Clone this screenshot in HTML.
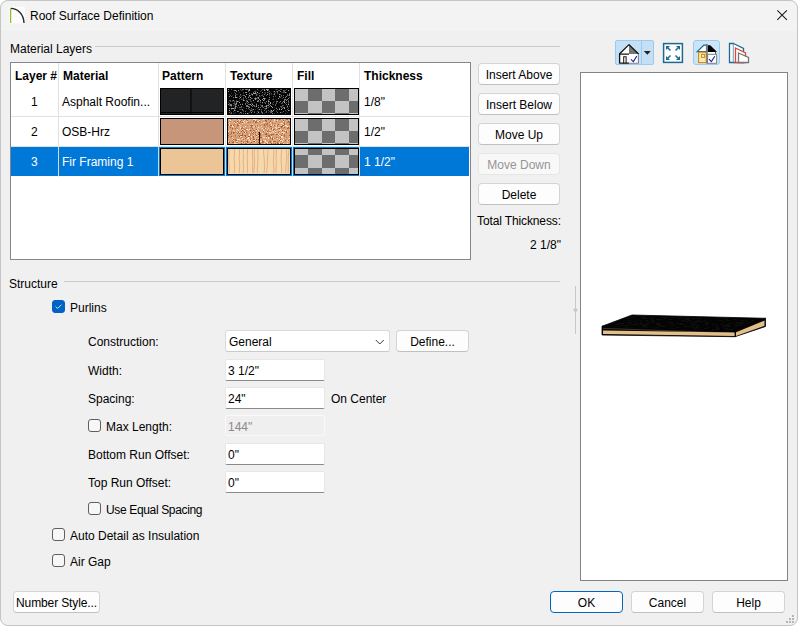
<!DOCTYPE html>
<html><head><meta charset="utf-8">
<style>
*{box-sizing:border-box;margin:0;padding:0}
html,body{width:798px;height:626px;overflow:hidden;background:#ffffff}
body{font-family:"Liberation Sans",sans-serif;font-size:12px;color:#000;position:relative}
.win{position:absolute;left:0;top:0;width:798px;height:626px;background:#f0f0f0;border-radius:8px;overflow:hidden}
.frame{position:absolute;left:0;top:0;width:798px;height:626px;border:1px solid #c4c4c4;border-radius:8px;pointer-events:none}
.title{position:absolute;left:0;top:0;width:798px;height:31px;background:#f3f3f3}
.a{position:absolute;white-space:nowrap;line-height:14px}
.btn{position:absolute;background:#fdfdfd;border:1px solid #d4d4d4;border-bottom-color:#c0c0c0;border-radius:4px;text-align:center;line-height:22px;font-size:12px;white-space:nowrap}
.btn.dis{color:#959595;background:#f8f8f8;border-color:#e6e6e6}
.inp{position:absolute;background:#fff;border:1px solid #e6e6e6;border-bottom:1px solid #8a8a8a;border-radius:2px;padding-left:2px;line-height:22px;white-space:nowrap}
.inp.dis{background:#efefef;color:#8a8a8a;border:1px solid #f9f9f9}
.cb{position:absolute;width:13px;height:13px;border:1px solid #5f5f5f;border-radius:3px;background:#f7f7f7}
.cb.on{background:#0063c6;border-color:#0063c6}
.grp{position:absolute;height:1px;background:#cbcbcb}
.tbl{position:absolute;left:10px;top:62px;width:461px;height:198px;background:#fff;border:1px solid #82878f}
.vl{position:absolute;width:1px;background:#e1e1e1}
.hl{position:absolute;left:0;height:1px;width:459px;background:#e1e1e1}
.b{font-weight:bold}
.sw{position:absolute;width:65px;height:27px;border:1px solid #000;overflow:hidden}
.sw svg{display:block}
.sel{color:#fff}
</style></head><body>
<div class="win">
 <div class="title"></div>
 <!-- title icon -->
 <svg class="a" style="left:9px;top:6px" width="17" height="18" viewBox="0 0 17 18">
  <rect x="0" y="0.5" width="16" height="17" fill="#fcfcfc"/>
  <path d="M1.6 2.4 C8.5 2.4 14.6 7.5 15 17" stroke="#2b2b2b" stroke-width="1.4" fill="none"/>
  <line x1="1.6" y1="3" x2="1.6" y2="17" stroke="#8cbf26" stroke-width="1.3"/>
 </svg>
 <div class="a" style="left:30px;top:9px">Roof Surface Definition</div>
 <svg class="a" style="left:776px;top:9px" width="13" height="13" viewBox="0 0 13 13">
  <path d="M1.3 1.3 L10.9 10.9 M10.9 1.3 L1.3 10.9" stroke="#1a1a1a" stroke-width="1.05"/>
 </svg>

 <!-- Material layers -->
 <div class="a" style="left:10px;top:42px">Material Layers</div>
 <div class="grp" style="left:95px;top:46px;width:465px"></div>

 <div class="tbl">
  <div class="vl" style="left:47px;top:0;height:114px"></div>
  <div class="vl" style="left:147px;top:0;height:114px"></div>
  <div class="vl" style="left:214px;top:0;height:114px"></div>
  <div class="vl" style="left:281px;top:0;height:114px"></div>
  <div class="vl" style="left:348px;top:0;height:114px"></div>
  <div class="hl" style="top:53px"></div>
  <div class="hl" style="top:83px"></div>
  <div class="a" style="left:0;top:84px;width:458px;height:29px;background:#0078d7"></div>
  <div class="vl" style="left:47px;top:84px;height:29px;background:#d8d8d8"></div>
  <div class="vl" style="left:147px;top:84px;height:29px;background:#d8d8d8"></div>
  <div class="vl" style="left:214px;top:84px;height:29px;background:#d8d8d8"></div>
  <div class="vl" style="left:281px;top:84px;height:29px;background:#d8d8d8"></div>
  <div class="vl" style="left:348px;top:84px;height:29px;background:#d8d8d8"></div>

  <div class="a b" style="left:4px;top:6px">Layer #</div>
  <div class="a b" style="left:52px;top:6px">Material</div>
  <div class="a b" style="left:151px;top:6px">Pattern</div>
  <div class="a b" style="left:219px;top:6px">Texture</div>
  <div class="a b" style="left:286px;top:6px">Fill</div>
  <div class="a b" style="left:353px;top:6px">Thickness</div>

  <div class="a" style="left:20px;top:32px">1</div>
  <div class="a" style="left:51px;top:32px">Asphalt Roofin...</div>
  <div class="a" style="left:353px;top:32px">1/8"</div>
  <div class="a" style="left:20px;top:62px">2</div>
  <div class="a" style="left:51px;top:62px">OSB-Hrz</div>
  <div class="a" style="left:353px;top:62px">1/2"</div>
  <div class="a sel" style="left:20px;top:92px">3</div>
  <div class="a sel" style="left:51px;top:92px">Fir Framing 1</div>
  <div class="a sel" style="left:353px;top:92px">1 1/2"</div>

  <!-- swatches row1 -->
  <div class="sw" style="left:149px;top:25px;width:64px;background:#222324"><svg width="63" height="25"><rect x="29.5" y="0" width="1" height="25" fill="#000"/><rect x="0" y="23" width="63" height="1" fill="#000"/></svg></div>
  <div class="sw" style="left:216px;top:25px;width:64px"><svg width="63" height="25"><rect width="63" height="25" fill="#060606"/><path fill="#a8a8a8" d="M4 19h1v1h-1zM48 18h1v1h-1zM19 24h1v1h-1zM18 3h1v1h-1zM5 11h1v1h-1zM26 4h1v1h-1zM55 3h1v1h-1zM38 19h1v1h-1zM32 7h1v1h-1zM19 0h1v1h-1zM9 22h1v1h-1zM43 17h1v1h-1zM47 15h1v1h-1zM19 12h1v1h-1zM51 5h1v1h-1zM17 7h1v1h-1zM51 20h1v1h-1zM36 13h1v1h-1zM62 9h1v1h-1zM51 7h1v1h-1zM36 1h1v1h-1zM30 23h1v1h-1zM15 21h1v1h-1zM3 19h1v1h-1zM14 6h1v1h-1zM49 0h1v1h-1zM49 4h1v1h-1zM7 1h1v1h-1zM46 12h1v1h-1zM36 5h1v1h-1zM56 13h1v1h-1zM44 18h1v1h-1zM27 4h1v1h-1zM2 16h1v1h-1zM53 3h1v1h-1zM37 9h1v1h-1zM45 21h1v1h-1zM11 13h1v1h-1zM46 2h1v1h-1zM21 0h1v1h-1zM24 15h1v1h-1zM7 8h1v1h-1zM42 13h1v1h-1zM41 8h1v1h-1zM32 11h1v1h-1zM29 3h1v1h-1zM45 2h1v1h-1zM25 11h1v1h-1zM3 4h1v1h-1zM28 17h1v1h-1zM22 15h1v1h-1zM6 21h1v1h-1zM50 9h1v1h-1zM46 20h1v1h-1zM8 14h1v1h-1zM39 1h1v1h-1zM5 19h1v1h-1zM21 6h1v1h-1zM31 10h1v1h-1zM30 22h1v1h-1zM39 0h1v1h-1zM1 21h1v1h-1zM2 15h1v1h-1zM60 21h1v1h-1zM40 12h1v1h-1zM54 13h1v1h-1zM24 15h1v1h-1zM43 21h1v1h-1zM53 20h1v1h-1zM56 19h1v1h-1zM36 9h1v1h-1zM9 18h1v1h-1zM5 1h1v1h-1zM38 0h1v1h-1zM12 8h1v1h-1zM42 14h1v1h-1zM7 17h1v1h-1zM27 20h1v1h-1zM15 11h1v1h-1zM30 18h1v1h-1zM57 3h1v1h-1zM32 16h1v1h-1zM40 15h1v1h-1zM60 1h1v1h-1zM27 10h1v1h-1zM38 17h1v1h-1zM21 1h1v1h-1zM8 8h1v1h-1zM10 1h1v1h-1zM31 20h1v1h-1zM18 5h1v1h-1zM4 11h1v1h-1zM35 9h1v1h-1zM62 22h1v1h-1zM34 17h1v1h-1zM25 20h1v1h-1zM9 12h1v1h-1zM24 5h1v1h-1zM60 19h1v1h-1zM59 6h1v1h-1zM60 15h1v1h-1zM39 5h1v1h-1zM39 1h1v1h-1zM24 6h1v1h-1zM35 11h1v1h-1zM4 19h1v1h-1zM12 0h1v1h-1zM27 9h1v1h-1zM56 2h1v1h-1zM20 2h1v1h-1zM41 12h1v1h-1zM15 18h1v1h-1zM11 24h1v1h-1zM22 8h1v1h-1z"/><path fill="#8a8a8a" d="M35 7h1v1h-1zM25 20h1v1h-1zM14 20h1v1h-1zM49 2h1v1h-1zM6 1h1v1h-1zM11 11h1v1h-1zM43 23h1v1h-1zM19 16h1v1h-1zM41 8h1v1h-1zM2 16h1v1h-1zM20 18h1v1h-1zM58 13h1v1h-1zM34 10h1v1h-1zM34 3h1v1h-1zM15 8h1v1h-1zM31 10h1v1h-1zM27 3h1v1h-1zM29 0h1v1h-1zM51 13h1v1h-1zM0 15h1v1h-1zM56 12h1v1h-1zM55 18h1v1h-1zM52 2h1v1h-1zM11 20h1v1h-1zM53 23h1v1h-1zM25 4h1v1h-1zM46 5h1v1h-1zM17 24h1v1h-1zM62 8h1v1h-1zM30 12h1v1h-1zM58 7h1v1h-1zM57 8h1v1h-1zM46 20h1v1h-1zM59 17h1v1h-1zM30 9h1v1h-1zM52 23h1v1h-1zM37 19h1v1h-1zM55 12h1v1h-1zM34 16h1v1h-1zM36 5h1v1h-1zM1 19h1v1h-1zM14 15h1v1h-1zM61 21h1v1h-1zM23 19h1v1h-1zM44 22h1v1h-1zM44 24h1v1h-1zM34 13h1v1h-1zM38 12h1v1h-1zM62 0h1v1h-1zM16 11h1v1h-1zM12 5h1v1h-1zM25 16h1v1h-1zM40 0h1v1h-1zM7 19h1v1h-1zM28 15h1v1h-1zM1 7h1v1h-1zM57 10h1v1h-1zM60 9h1v1h-1zM49 12h1v1h-1zM0 2h1v1h-1zM61 6h1v1h-1zM20 17h1v1h-1zM52 12h1v1h-1zM38 16h1v1h-1zM13 10h1v1h-1zM18 0h1v1h-1zM12 23h1v1h-1zM50 9h1v1h-1zM4 6h1v1h-1zM33 17h1v1h-1zM0 0h1v1h-1zM40 16h1v1h-1zM34 0h1v1h-1zM2 15h1v1h-1zM33 20h1v1h-1zM18 16h1v1h-1zM36 10h1v1h-1zM7 15h1v1h-1zM58 11h1v1h-1zM61 5h1v1h-1zM9 22h1v1h-1zM11 9h1v1h-1zM41 4h1v1h-1zM3 16h1v1h-1zM17 3h1v1h-1zM60 11h1v1h-1zM62 15h1v1h-1zM29 12h1v1h-1zM11 9h1v1h-1zM20 8h1v1h-1zM36 0h1v1h-1zM23 16h1v1h-1zM8 2h1v1h-1zM23 23h1v1h-1zM56 12h1v1h-1zM18 17h1v1h-1zM0 15h1v1h-1zM30 8h1v1h-1zM56 18h1v1h-1zM56 10h1v1h-1zM42 16h1v1h-1zM21 18h1v1h-1zM12 15h1v1h-1zM20 15h1v1h-1zM23 12h1v1h-1zM7 6h1v1h-1zM19 14h1v1h-1zM36 5h1v1h-1zM30 22h1v1h-1z"/><path fill="#6e6e6e" d="M58 15h1v1h-1zM61 4h1v1h-1zM31 6h1v1h-1zM49 20h1v1h-1zM58 0h1v1h-1zM10 22h1v1h-1zM53 18h1v1h-1zM21 17h1v1h-1zM18 19h1v1h-1zM62 10h1v1h-1zM39 16h1v1h-1zM45 7h1v1h-1zM19 17h1v1h-1zM22 21h1v1h-1zM38 22h1v1h-1zM1 11h1v1h-1zM40 14h1v1h-1zM37 19h1v1h-1zM20 24h1v1h-1zM54 19h1v1h-1zM55 8h1v1h-1zM51 19h1v1h-1zM18 16h1v1h-1zM47 16h1v1h-1zM10 16h1v1h-1zM21 4h1v1h-1zM51 1h1v1h-1zM3 24h1v1h-1zM3 15h1v1h-1zM20 2h1v1h-1zM37 9h1v1h-1zM16 6h1v1h-1zM48 22h1v1h-1zM13 17h1v1h-1zM59 10h1v1h-1zM62 17h1v1h-1zM52 0h1v1h-1zM30 22h1v1h-1zM3 17h1v1h-1zM48 12h1v1h-1zM34 24h1v1h-1zM19 0h1v1h-1zM11 18h1v1h-1zM4 6h1v1h-1zM15 6h1v1h-1zM55 1h1v1h-1zM5 8h1v1h-1zM8 17h1v1h-1zM28 16h1v1h-1zM23 21h1v1h-1zM48 14h1v1h-1zM26 17h1v1h-1zM30 16h1v1h-1zM55 8h1v1h-1zM60 12h1v1h-1zM35 18h1v1h-1zM43 22h1v1h-1zM7 18h1v1h-1zM34 0h1v1h-1zM20 10h1v1h-1zM41 15h1v1h-1zM16 11h1v1h-1zM28 16h1v1h-1zM12 5h1v1h-1zM39 3h1v1h-1zM3 23h1v1h-1zM17 14h1v1h-1zM17 0h1v1h-1zM40 11h1v1h-1zM21 15h1v1h-1zM24 17h1v1h-1zM59 5h1v1h-1zM30 11h1v1h-1zM41 10h1v1h-1zM25 3h1v1h-1zM7 7h1v1h-1zM41 2h1v1h-1zM43 23h1v1h-1zM28 2h1v1h-1zM54 13h1v1h-1zM46 4h1v1h-1zM6 14h1v1h-1zM23 9h1v1h-1zM1 14h1v1h-1zM56 11h1v1h-1zM15 0h1v1h-1zM28 9h1v1h-1zM26 23h1v1h-1zM32 13h1v1h-1zM6 13h1v1h-1zM28 14h1v1h-1zM17 0h1v1h-1zM17 22h1v1h-1zM28 6h1v1h-1zM20 1h1v1h-1zM13 1h1v1h-1zM8 13h1v1h-1zM53 0h1v1h-1zM29 8h1v1h-1zM7 4h1v1h-1zM8 12h1v1h-1zM1 23h1v1h-1zM34 17h1v1h-1zM48 19h1v1h-1zM36 21h1v1h-1zM33 22h1v1h-1zM37 14h1v1h-1zM32 18h1v1h-1zM49 23h1v1h-1zM55 22h1v1h-1zM18 9h1v1h-1zM8 15h1v1h-1zM54 19h1v1h-1zM31 4h1v1h-1zM14 0h1v1h-1zM20 13h1v1h-1zM34 23h1v1h-1zM30 4h1v1h-1zM40 21h1v1h-1zM12 18h1v1h-1zM37 17h1v1h-1zM39 16h1v1h-1zM53 6h1v1h-1zM11 9h1v1h-1z"/><path fill="#555555" d="M53 17h1v1h-1zM55 16h1v1h-1zM52 8h1v1h-1zM38 23h1v1h-1zM45 13h1v1h-1zM46 18h1v1h-1zM61 21h1v1h-1zM26 16h1v1h-1zM30 20h1v1h-1zM18 13h1v1h-1zM2 6h1v1h-1zM23 4h1v1h-1zM20 0h1v1h-1zM40 10h1v1h-1zM53 7h1v1h-1zM13 18h1v1h-1zM37 4h1v1h-1zM26 9h1v1h-1zM12 0h1v1h-1zM59 6h1v1h-1zM33 17h1v1h-1zM62 17h1v1h-1zM52 0h1v1h-1zM40 18h1v1h-1zM33 16h1v1h-1zM24 20h1v1h-1zM41 17h1v1h-1zM23 20h1v1h-1zM26 22h1v1h-1zM54 16h1v1h-1zM15 24h1v1h-1zM23 19h1v1h-1zM26 2h1v1h-1zM32 7h1v1h-1zM42 22h1v1h-1zM15 10h1v1h-1zM49 4h1v1h-1zM38 6h1v1h-1zM56 1h1v1h-1zM2 11h1v1h-1zM21 10h1v1h-1zM47 15h1v1h-1zM7 21h1v1h-1zM41 5h1v1h-1zM17 8h1v1h-1zM22 10h1v1h-1zM12 18h1v1h-1zM42 23h1v1h-1zM53 14h1v1h-1zM57 21h1v1h-1zM33 20h1v1h-1zM59 20h1v1h-1zM32 2h1v1h-1zM55 6h1v1h-1zM50 1h1v1h-1zM10 12h1v1h-1zM1 14h1v1h-1zM48 22h1v1h-1zM28 5h1v1h-1zM3 0h1v1h-1zM28 10h1v1h-1zM3 7h1v1h-1zM2 12h1v1h-1zM6 12h1v1h-1zM57 24h1v1h-1zM51 13h1v1h-1zM48 0h1v1h-1zM6 14h1v1h-1zM6 20h1v1h-1zM18 19h1v1h-1zM22 6h1v1h-1zM21 7h1v1h-1zM60 13h1v1h-1zM57 24h1v1h-1zM17 15h1v1h-1zM2 11h1v1h-1zM58 13h1v1h-1zM23 5h1v1h-1zM19 14h1v1h-1zM13 24h1v1h-1zM15 21h1v1h-1zM57 14h1v1h-1zM51 8h1v1h-1zM33 1h1v1h-1zM31 7h1v1h-1zM41 12h1v1h-1zM20 19h1v1h-1zM26 2h1v1h-1zM27 8h1v1h-1zM11 7h1v1h-1zM34 6h1v1h-1zM49 3h1v1h-1zM45 10h1v1h-1zM33 23h1v1h-1zM36 13h1v1h-1zM62 1h1v1h-1zM55 3h1v1h-1zM13 10h1v1h-1zM15 9h1v1h-1zM61 8h1v1h-1zM33 16h1v1h-1zM3 7h1v1h-1zM3 17h1v1h-1zM56 3h1v1h-1zM23 12h1v1h-1zM56 2h1v1h-1zM1 11h1v1h-1zM20 15h1v1h-1zM21 20h1v1h-1zM11 7h1v1h-1zM52 17h1v1h-1zM18 11h1v1h-1zM33 6h1v1h-1zM3 23h1v1h-1zM11 3h1v1h-1zM7 16h1v1h-1zM3 7h1v1h-1z"/><path fill="#404040" d="M15 18h1v1h-1zM8 11h1v1h-1zM30 20h1v1h-1zM45 15h1v1h-1zM36 11h1v1h-1zM37 13h1v1h-1zM61 17h1v1h-1zM24 22h1v1h-1zM6 19h1v1h-1zM24 14h1v1h-1zM24 20h1v1h-1zM27 8h1v1h-1zM0 13h1v1h-1zM49 0h1v1h-1zM6 3h1v1h-1zM60 19h1v1h-1zM55 2h1v1h-1zM2 22h1v1h-1zM15 8h1v1h-1zM5 16h1v1h-1zM23 14h1v1h-1zM40 1h1v1h-1zM20 18h1v1h-1zM2 24h1v1h-1zM15 3h1v1h-1zM47 3h1v1h-1zM60 11h1v1h-1zM26 22h1v1h-1zM30 22h1v1h-1zM60 14h1v1h-1zM9 18h1v1h-1zM38 18h1v1h-1zM37 20h1v1h-1zM8 5h1v1h-1zM13 20h1v1h-1zM36 17h1v1h-1zM46 20h1v1h-1zM45 5h1v1h-1zM15 22h1v1h-1zM9 8h1v1h-1zM40 15h1v1h-1zM12 6h1v1h-1zM13 1h1v1h-1zM54 14h1v1h-1zM1 5h1v1h-1zM58 3h1v1h-1zM31 7h1v1h-1zM27 2h1v1h-1zM1 5h1v1h-1zM12 20h1v1h-1zM24 9h1v1h-1zM32 12h1v1h-1zM52 5h1v1h-1zM46 24h1v1h-1zM20 7h1v1h-1zM54 17h1v1h-1zM26 16h1v1h-1zM29 5h1v1h-1zM14 21h1v1h-1zM22 12h1v1h-1zM48 2h1v1h-1zM13 23h1v1h-1zM29 22h1v1h-1zM60 6h1v1h-1zM47 7h1v1h-1zM22 11h1v1h-1zM43 5h1v1h-1zM48 13h1v1h-1zM48 10h1v1h-1zM33 21h1v1h-1zM43 4h1v1h-1zM59 18h1v1h-1zM36 19h1v1h-1zM5 22h1v1h-1zM4 11h1v1h-1zM28 4h1v1h-1zM8 1h1v1h-1zM5 14h1v1h-1zM9 18h1v1h-1zM40 10h1v1h-1zM22 22h1v1h-1zM11 3h1v1h-1zM34 5h1v1h-1zM26 13h1v1h-1zM19 11h1v1h-1zM56 3h1v1h-1zM37 3h1v1h-1zM7 5h1v1h-1zM24 6h1v1h-1zM40 13h1v1h-1zM3 20h1v1h-1zM1 16h1v1h-1zM20 24h1v1h-1z"/><path fill="#303030" d="M47 0h1v1h-1zM14 10h1v1h-1zM38 21h1v1h-1zM36 3h1v1h-1zM41 6h1v1h-1zM27 20h1v1h-1zM39 18h1v1h-1zM8 1h1v1h-1zM37 1h1v1h-1zM20 5h1v1h-1zM27 20h1v1h-1zM20 10h1v1h-1zM21 23h1v1h-1zM29 11h1v1h-1zM27 17h1v1h-1zM14 1h1v1h-1zM29 24h1v1h-1zM30 1h1v1h-1zM35 0h1v1h-1zM7 14h1v1h-1zM7 23h1v1h-1zM42 3h1v1h-1zM6 18h1v1h-1zM36 3h1v1h-1zM54 3h1v1h-1zM32 16h1v1h-1zM29 19h1v1h-1zM48 18h1v1h-1zM59 16h1v1h-1zM30 4h1v1h-1zM6 15h1v1h-1zM20 7h1v1h-1zM44 15h1v1h-1zM1 15h1v1h-1zM4 12h1v1h-1zM41 22h1v1h-1zM37 23h1v1h-1zM6 16h1v1h-1zM42 21h1v1h-1zM48 10h1v1h-1zM45 9h1v1h-1zM46 18h1v1h-1zM11 20h1v1h-1zM11 11h1v1h-1zM58 10h1v1h-1zM34 18h1v1h-1zM36 24h1v1h-1zM7 5h1v1h-1zM6 24h1v1h-1zM45 2h1v1h-1zM4 6h1v1h-1zM57 1h1v1h-1zM2 22h1v1h-1zM5 1h1v1h-1zM21 17h1v1h-1zM53 23h1v1h-1zM14 14h1v1h-1zM58 22h1v1h-1zM9 5h1v1h-1zM5 24h1v1h-1zM28 14h1v1h-1zM28 2h1v1h-1zM13 7h1v1h-1zM3 4h1v1h-1zM48 21h1v1h-1zM29 9h1v1h-1zM47 6h1v1h-1zM47 6h1v1h-1zM31 24h1v1h-1zM18 12h1v1h-1zM27 1h1v1h-1zM15 4h1v1h-1zM6 13h1v1h-1zM32 15h1v1h-1zM14 6h1v1h-1zM7 23h1v1h-1zM53 3h1v1h-1zM44 14h1v1h-1zM11 24h1v1h-1zM59 23h1v1h-1zM32 7h1v1h-1zM21 23h1v1h-1zM46 12h1v1h-1zM23 20h1v1h-1zM34 14h1v1h-1zM28 10h1v1h-1zM40 23h1v1h-1zM28 24h1v1h-1zM40 3h1v1h-1zM54 23h1v1h-1zM54 9h1v1h-1zM24 21h1v1h-1zM44 10h1v1h-1z"/></svg></div>
  <div class="sw" style="left:283px;top:25px"><svg width="63" height="25" style="display:block"><rect width="63" height="25" fill="#c3c3c3"/><path fill="#6d6d6d" d="M13 0H27V12H13zM40 0H54V12H40zM0 12H13V24H0zM27 12H40V24H27zM54 12H63V24H54zM13 24H27V25H13zM40 24H54V25H40z"/></svg></div>
  <!-- row2 -->
  <div class="sw" style="left:149px;top:55px;width:64px;background:#c7967a"></div>
  <div class="sw" style="left:216px;top:55px;width:64px"><svg width="63" height="25"><rect width="63" height="25" fill="#d9a179"/><path fill="#f3d4b8" d="M28 11h1v1h-1zM6 23h1v1h-1zM27 20h1v1h-1zM16 5h1v1h-1zM10 0h1v1h-1zM28 7h1v1h-1zM18 3h1v1h-1zM1 0h1v1h-1zM30 19h1v1h-1zM57 0h1v1h-1zM25 20h1v1h-1zM32 16h1v1h-1zM29 10h1v1h-1zM24 13h1v1h-1zM49 19h1v1h-1zM14 10h1v1h-1zM34 14h1v1h-1zM5 11h1v1h-1zM56 0h1v1h-1zM1 6h1v1h-1zM45 14h1v1h-1zM49 10h1v1h-1zM55 6h1v1h-1zM40 11h1v1h-1zM19 15h1v1h-1zM12 17h1v1h-1zM30 22h1v1h-1zM26 23h1v1h-1zM54 13h1v1h-1zM56 13h1v1h-1zM23 23h1v1h-1zM32 18h1v1h-1zM55 13h1v1h-1zM4 18h1v1h-1zM25 21h1v1h-1zM10 20h1v1h-1zM51 13h1v1h-1zM51 11h1v1h-1zM16 3h1v1h-1zM45 12h1v1h-1zM9 22h1v1h-1zM46 1h1v1h-1zM23 20h1v1h-1zM31 10h1v1h-1zM13 12h1v1h-1zM56 8h1v1h-1zM0 12h1v1h-1zM28 17h1v1h-1zM25 22h1v1h-1zM42 4h1v1h-1zM54 4h1v1h-1zM39 13h1v1h-1zM25 7h1v1h-1zM10 11h1v1h-1zM32 11h1v1h-1zM38 15h1v1h-1zM4 20h1v1h-1zM45 20h1v1h-1zM45 6h1v1h-1zM6 2h1v1h-1zM10 3h1v1h-1zM0 24h1v1h-1zM8 12h1v1h-1zM42 2h1v1h-1zM33 4h1v1h-1zM61 19h1v1h-1zM46 11h1v1h-1zM45 15h1v1h-1zM45 12h1v1h-1zM44 22h1v1h-1zM53 6h1v1h-1zM61 4h1v1h-1zM53 16h1v1h-1zM25 16h1v1h-1zM28 11h1v1h-1zM24 16h1v1h-1zM35 21h1v1h-1zM22 21h1v1h-1zM36 19h1v1h-1zM12 6h1v1h-1zM58 5h1v1h-1zM47 24h1v1h-1zM55 5h1v1h-1zM32 13h1v1h-1zM35 3h1v1h-1zM60 22h1v1h-1zM27 1h1v1h-1zM36 0h1v1h-1zM30 16h1v1h-1zM36 24h1v1h-1zM27 0h1v1h-1zM42 3h1v1h-1zM32 8h1v1h-1zM62 13h1v1h-1zM45 15h1v1h-1zM27 2h1v1h-1zM32 8h1v1h-1zM44 22h1v1h-1zM61 1h1v1h-1zM53 21h1v1h-1zM21 21h1v1h-1zM58 7h1v1h-1zM39 24h1v1h-1zM62 2h1v1h-1zM55 7h1v1h-1zM26 15h1v1h-1zM20 23h1v1h-1zM42 20h1v1h-1zM34 10h1v1h-1zM10 0h1v1h-1zM21 21h1v1h-1zM51 12h1v1h-1zM29 2h1v1h-1zM57 3h1v1h-1zM11 1h1v1h-1zM58 6h1v1h-1zM52 21h1v1h-1zM53 24h1v1h-1zM41 12h1v1h-1zM16 4h1v1h-1z"/><path fill="#eac19e" d="M48 5h1v1h-1zM37 10h1v1h-1zM36 12h1v1h-1zM7 3h1v1h-1zM25 8h1v1h-1zM14 8h1v1h-1zM57 3h1v1h-1zM13 23h1v1h-1zM16 4h1v1h-1zM6 0h1v1h-1zM53 11h1v1h-1zM62 18h1v1h-1zM40 9h1v1h-1zM11 14h1v1h-1zM40 18h1v1h-1zM40 5h1v1h-1zM43 15h1v1h-1zM13 11h1v1h-1zM41 13h1v1h-1zM36 21h1v1h-1zM49 16h1v1h-1zM14 23h1v1h-1zM48 8h1v1h-1zM58 20h1v1h-1zM22 21h1v1h-1zM16 23h1v1h-1zM38 18h1v1h-1zM38 17h1v1h-1zM11 7h1v1h-1zM43 13h1v1h-1zM6 24h1v1h-1zM18 11h1v1h-1zM52 6h1v1h-1zM54 9h1v1h-1zM54 22h1v1h-1zM43 18h1v1h-1zM52 16h1v1h-1zM21 7h1v1h-1zM23 17h1v1h-1zM53 0h1v1h-1zM19 11h1v1h-1zM0 5h1v1h-1zM48 7h1v1h-1zM28 7h1v1h-1zM62 23h1v1h-1zM62 6h1v1h-1zM49 23h1v1h-1zM16 17h1v1h-1zM22 5h1v1h-1zM49 7h1v1h-1zM2 2h1v1h-1zM28 5h1v1h-1zM44 11h1v1h-1zM38 12h1v1h-1zM18 2h1v1h-1zM13 20h1v1h-1zM31 21h1v1h-1zM24 9h1v1h-1zM50 9h1v1h-1zM56 3h1v1h-1zM43 9h1v1h-1zM41 11h1v1h-1zM37 15h1v1h-1zM9 13h1v1h-1zM4 2h1v1h-1zM26 7h1v1h-1zM35 10h1v1h-1zM22 7h1v1h-1zM33 9h1v1h-1zM11 5h1v1h-1zM27 22h1v1h-1zM54 18h1v1h-1zM16 18h1v1h-1zM51 23h1v1h-1zM57 0h1v1h-1zM42 13h1v1h-1zM14 23h1v1h-1zM61 10h1v1h-1zM20 11h1v1h-1zM9 24h1v1h-1zM28 15h1v1h-1zM53 13h1v1h-1zM8 18h1v1h-1zM8 24h1v1h-1zM32 15h1v1h-1zM5 8h1v1h-1zM17 7h1v1h-1zM35 11h1v1h-1zM30 8h1v1h-1zM23 18h1v1h-1zM34 19h1v1h-1zM34 17h1v1h-1zM51 6h1v1h-1zM62 2h1v1h-1zM39 10h1v1h-1zM13 15h1v1h-1zM32 24h1v1h-1zM4 20h1v1h-1zM16 14h1v1h-1zM46 11h1v1h-1zM60 7h1v1h-1zM46 2h1v1h-1zM25 12h1v1h-1zM5 19h1v1h-1zM37 12h1v1h-1zM11 13h1v1h-1zM62 3h1v1h-1zM24 17h1v1h-1zM18 23h1v1h-1zM7 7h1v1h-1zM56 15h1v1h-1zM10 11h1v1h-1zM51 0h1v1h-1zM57 19h1v1h-1zM44 12h1v1h-1zM10 6h1v1h-1zM60 19h1v1h-1zM30 6h1v1h-1zM28 14h1v1h-1zM49 11h1v1h-1zM28 0h1v1h-1zM56 0h1v1h-1zM34 21h1v1h-1zM21 18h1v1h-1zM41 16h1v1h-1zM29 9h1v1h-1zM3 0h1v1h-1zM51 8h1v1h-1zM5 19h1v1h-1zM20 21h1v1h-1zM26 22h1v1h-1zM44 23h1v1h-1zM22 13h1v1h-1zM27 2h1v1h-1zM54 21h1v1h-1zM52 20h1v1h-1zM52 4h1v1h-1zM27 18h1v1h-1zM22 23h1v1h-1zM8 22h1v1h-1zM9 13h1v1h-1zM26 17h1v1h-1zM53 18h1v1h-1zM45 15h1v1h-1zM20 17h1v1h-1zM9 15h1v1h-1zM16 21h1v1h-1zM17 10h1v1h-1z"/><path fill="#c07c50" d="M38 7h1v1h-1zM31 0h1v1h-1zM55 23h1v1h-1zM22 16h1v1h-1zM40 17h1v1h-1zM20 17h1v1h-1zM10 16h1v1h-1zM23 13h1v1h-1zM16 11h1v1h-1zM55 22h1v1h-1zM53 24h1v1h-1zM17 16h1v1h-1zM37 12h1v1h-1zM2 1h1v1h-1zM13 24h1v1h-1zM12 3h1v1h-1zM42 19h1v1h-1zM39 2h1v1h-1zM18 18h1v1h-1zM28 16h1v1h-1zM19 16h1v1h-1zM15 2h1v1h-1zM47 12h1v1h-1zM15 12h1v1h-1zM20 3h1v1h-1zM25 1h1v1h-1zM60 9h1v1h-1zM52 7h1v1h-1zM13 9h1v1h-1zM22 19h1v1h-1zM0 3h1v1h-1zM42 5h1v1h-1zM62 12h1v1h-1zM42 15h1v1h-1zM4 7h1v1h-1zM49 24h1v1h-1zM25 22h1v1h-1zM12 8h1v1h-1zM50 9h1v1h-1zM22 0h1v1h-1zM2 15h1v1h-1zM20 3h1v1h-1zM43 10h1v1h-1zM15 20h1v1h-1zM8 23h1v1h-1zM43 6h1v1h-1zM56 15h1v1h-1zM56 2h1v1h-1zM56 3h1v1h-1zM7 12h1v1h-1zM55 23h1v1h-1zM2 2h1v1h-1zM16 10h1v1h-1zM50 22h1v1h-1zM50 0h1v1h-1zM6 7h1v1h-1zM53 22h1v1h-1zM19 14h1v1h-1zM5 10h1v1h-1zM4 21h1v1h-1zM23 8h1v1h-1zM38 14h1v1h-1zM50 16h1v1h-1zM46 19h1v1h-1zM43 10h1v1h-1zM32 3h1v1h-1zM37 7h1v1h-1zM22 3h1v1h-1zM23 11h1v1h-1zM19 21h1v1h-1zM25 19h1v1h-1zM44 18h1v1h-1zM61 22h1v1h-1zM7 17h1v1h-1zM61 9h1v1h-1zM56 7h1v1h-1zM58 18h1v1h-1zM19 2h1v1h-1zM18 9h1v1h-1zM11 5h1v1h-1zM29 24h1v1h-1zM20 17h1v1h-1zM19 22h1v1h-1zM2 18h1v1h-1zM22 24h1v1h-1zM44 6h1v1h-1zM21 10h1v1h-1zM61 2h1v1h-1zM9 9h1v1h-1zM4 10h1v1h-1zM47 13h1v1h-1zM34 21h1v1h-1zM6 5h1v1h-1zM15 9h1v1h-1zM49 14h1v1h-1zM42 1h1v1h-1zM14 9h1v1h-1zM38 7h1v1h-1zM11 2h1v1h-1zM27 2h1v1h-1zM26 1h1v1h-1zM47 22h1v1h-1zM11 13h1v1h-1zM41 12h1v1h-1zM22 21h1v1h-1zM57 21h1v1h-1zM30 14h1v1h-1zM29 3h1v1h-1zM62 17h1v1h-1zM47 4h1v1h-1zM35 22h1v1h-1zM3 14h1v1h-1zM49 7h1v1h-1zM32 6h1v1h-1zM15 2h1v1h-1zM4 15h1v1h-1zM44 11h1v1h-1zM60 3h1v1h-1zM45 24h1v1h-1zM37 4h1v1h-1zM52 0h1v1h-1zM3 0h1v1h-1zM18 24h1v1h-1zM32 15h1v1h-1zM14 14h1v1h-1zM18 18h1v1h-1zM22 8h1v1h-1zM43 17h1v1h-1zM19 6h1v1h-1zM30 21h1v1h-1zM17 10h1v1h-1z"/><path fill="#b06a40" d="M43 15h1v1h-1zM52 20h1v1h-1zM36 5h1v1h-1zM18 22h1v1h-1zM38 15h1v1h-1zM16 18h1v1h-1zM42 7h1v1h-1zM48 2h1v1h-1zM32 23h1v1h-1zM22 6h1v1h-1zM34 21h1v1h-1zM42 23h1v1h-1zM4 15h1v1h-1zM7 21h1v1h-1zM38 1h1v1h-1zM17 16h1v1h-1zM8 7h1v1h-1zM58 0h1v1h-1zM7 3h1v1h-1zM9 5h1v1h-1zM12 2h1v1h-1zM56 12h1v1h-1zM49 6h1v1h-1zM22 6h1v1h-1zM53 16h1v1h-1zM45 11h1v1h-1zM24 16h1v1h-1zM42 2h1v1h-1zM7 16h1v1h-1zM51 12h1v1h-1zM49 23h1v1h-1zM0 5h1v1h-1zM18 11h1v1h-1zM54 11h1v1h-1zM0 24h1v1h-1zM36 9h1v1h-1zM61 16h1v1h-1zM39 5h1v1h-1zM31 8h1v1h-1zM41 3h1v1h-1zM46 6h1v1h-1zM41 6h1v1h-1zM16 16h1v1h-1zM17 24h1v1h-1zM9 6h1v1h-1zM41 3h1v1h-1zM9 7h1v1h-1zM28 3h1v1h-1zM5 14h1v1h-1zM32 14h1v1h-1zM1 5h1v1h-1zM5 22h1v1h-1zM43 7h1v1h-1zM19 3h1v1h-1zM45 15h1v1h-1zM8 18h1v1h-1zM42 12h1v1h-1zM15 0h1v1h-1zM41 22h1v1h-1zM25 2h1v1h-1zM6 2h1v1h-1zM16 10h1v1h-1zM44 4h1v1h-1zM50 24h1v1h-1zM45 22h1v1h-1zM37 15h1v1h-1zM38 17h1v1h-1zM50 13h1v1h-1zM11 4h1v1h-1zM13 18h1v1h-1zM56 4h1v1h-1zM40 11h1v1h-1zM25 11h1v1h-1zM60 21h1v1h-1zM54 6h1v1h-1zM52 18h1v1h-1zM47 24h1v1h-1zM24 6h1v1h-1zM24 15h1v1h-1zM20 3h1v1h-1zM0 6h1v1h-1zM45 11h1v1h-1zM46 10h1v1h-1zM2 8h1v1h-1zM17 24h1v1h-1zM44 15h1v1h-1zM56 17h1v1h-1zM30 23h1v1h-1zM62 16h1v1h-1zM59 3h1v1h-1zM11 14h1v1h-1zM54 24h1v1h-1zM14 15h1v1h-1zM25 20h1v1h-1zM54 18h1v1h-1zM32 8h1v1h-1zM48 9h1v1h-1zM34 22h1v1h-1zM56 4h1v1h-1zM50 1h1v1h-1zM43 0h1v1h-1zM40 23h1v1h-1zM14 8h1v1h-1zM24 9h1v1h-1zM8 18h1v1h-1zM42 22h1v1h-1zM9 23h1v1h-1zM51 21h1v1h-1zM9 0h1v1h-1zM43 16h1v1h-1zM56 16h1v1h-1zM7 9h1v1h-1zM7 20h1v1h-1zM5 14h1v1h-1zM26 11h1v1h-1zM50 8h1v1h-1zM51 3h1v1h-1zM11 20h1v1h-1zM28 2h1v1h-1zM43 16h1v1h-1zM17 19h1v1h-1zM23 6h1v1h-1zM19 1h1v1h-1zM58 20h1v1h-1zM12 16h1v1h-1zM7 0h1v1h-1zM3 13h1v1h-1zM32 15h1v1h-1zM13 1h1v1h-1zM21 15h1v1h-1zM22 15h1v1h-1zM39 12h1v1h-1zM41 8h1v1h-1zM41 16h1v1h-1zM51 4h1v1h-1zM41 16h1v1h-1zM49 15h1v1h-1zM25 15h1v1h-1z"/><path fill="#e4ad84" d="M38 5h1v1h-1zM39 2h1v1h-1zM37 21h1v1h-1zM53 23h1v1h-1zM62 13h1v1h-1zM18 17h1v1h-1zM31 13h1v1h-1zM36 16h1v1h-1zM14 11h1v1h-1zM22 21h1v1h-1zM19 24h1v1h-1zM51 4h1v1h-1zM61 21h1v1h-1zM47 20h1v1h-1zM50 15h1v1h-1zM32 0h1v1h-1zM13 3h1v1h-1zM21 17h1v1h-1zM0 16h1v1h-1zM29 13h1v1h-1zM16 18h1v1h-1zM28 6h1v1h-1zM26 10h1v1h-1zM23 15h1v1h-1zM30 2h1v1h-1zM53 3h1v1h-1zM47 19h1v1h-1zM39 23h1v1h-1zM55 20h1v1h-1zM11 12h1v1h-1zM33 21h1v1h-1zM61 17h1v1h-1zM44 11h1v1h-1zM52 11h1v1h-1zM33 2h1v1h-1zM62 10h1v1h-1zM55 18h1v1h-1zM54 1h1v1h-1zM20 13h1v1h-1zM35 23h1v1h-1zM41 15h1v1h-1zM56 7h1v1h-1zM59 0h1v1h-1zM14 21h1v1h-1zM20 18h1v1h-1zM9 12h1v1h-1zM29 21h1v1h-1zM32 17h1v1h-1zM45 14h1v1h-1zM1 23h1v1h-1zM40 0h1v1h-1zM41 18h1v1h-1zM15 8h1v1h-1zM44 21h1v1h-1zM36 14h1v1h-1zM21 1h1v1h-1zM0 7h1v1h-1zM31 14h1v1h-1zM54 10h1v1h-1zM24 16h1v1h-1zM18 21h1v1h-1zM49 16h1v1h-1zM22 0h1v1h-1zM1 18h1v1h-1zM18 14h1v1h-1zM32 8h1v1h-1zM38 13h1v1h-1zM4 6h1v1h-1zM5 10h1v1h-1zM41 15h1v1h-1zM18 20h1v1h-1zM22 1h1v1h-1zM5 1h1v1h-1zM55 6h1v1h-1zM59 22h1v1h-1zM44 14h1v1h-1zM21 1h1v1h-1zM7 0h1v1h-1zM19 11h1v1h-1zM51 6h1v1h-1zM31 22h1v1h-1zM31 8h1v1h-1zM34 23h1v1h-1zM20 16h1v1h-1zM57 5h1v1h-1zM50 15h1v1h-1zM29 23h1v1h-1zM11 2h1v1h-1zM62 16h1v1h-1zM28 12h1v1h-1zM34 19h1v1h-1zM8 11h1v1h-1zM48 1h1v1h-1zM38 22h1v1h-1zM44 7h1v1h-1zM14 12h1v1h-1zM21 9h1v1h-1zM14 0h1v1h-1zM22 1h1v1h-1zM40 8h1v1h-1zM9 1h1v1h-1zM40 5h1v1h-1zM24 15h1v1h-1zM19 5h1v1h-1zM45 17h1v1h-1zM52 24h1v1h-1zM26 23h1v1h-1zM2 19h1v1h-1zM31 17h1v1h-1zM34 1h1v1h-1zM16 20h1v1h-1zM48 3h1v1h-1zM23 0h1v1h-1zM11 23h1v1h-1zM17 7h1v1h-1zM60 22h1v1h-1zM26 24h1v1h-1zM19 0h1v1h-1zM49 17h1v1h-1zM56 24h1v1h-1zM48 14h1v1h-1zM16 17h1v1h-1zM23 0h1v1h-1zM45 20h1v1h-1zM36 22h1v1h-1zM38 7h1v1h-1zM32 23h1v1h-1zM27 19h1v1h-1zM36 19h1v1h-1zM7 7h1v1h-1zM13 9h1v1h-1zM55 22h1v1h-1zM58 10h1v1h-1zM4 14h1v1h-1zM1 18h1v1h-1zM49 14h1v1h-1zM12 1h1v1h-1zM46 20h1v1h-1zM54 5h1v1h-1zM58 24h1v1h-1zM4 15h1v1h-1zM36 0h1v1h-1zM48 19h1v1h-1z"/><path fill="#f8e2cc" d="M13 21h1v1h-1zM45 13h1v1h-1zM55 14h1v1h-1zM31 1h1v1h-1zM43 17h1v1h-1zM27 15h1v1h-1zM35 18h1v1h-1zM59 12h1v1h-1zM30 8h1v1h-1zM16 11h1v1h-1zM62 14h1v1h-1zM62 3h1v1h-1zM54 22h1v1h-1zM16 1h1v1h-1zM9 3h1v1h-1zM21 16h1v1h-1zM59 21h1v1h-1zM6 12h1v1h-1zM25 0h1v1h-1zM31 2h1v1h-1zM26 21h1v1h-1zM48 6h1v1h-1zM36 18h1v1h-1zM35 0h1v1h-1zM54 7h1v1h-1zM50 8h1v1h-1zM1 5h1v1h-1zM7 24h1v1h-1zM30 11h1v1h-1zM46 0h1v1h-1zM47 8h1v1h-1zM53 7h1v1h-1zM5 21h1v1h-1zM8 22h1v1h-1zM33 22h1v1h-1zM18 10h1v1h-1zM38 23h1v1h-1zM58 20h1v1h-1zM60 8h1v1h-1zM11 13h1v1h-1zM59 7h1v1h-1zM47 12h1v1h-1zM55 24h1v1h-1zM9 20h1v1h-1zM33 7h1v1h-1zM19 19h1v1h-1zM5 6h1v1h-1zM54 7h1v1h-1zM37 21h1v1h-1zM1 3h1v1h-1zM52 21h1v1h-1zM53 4h1v1h-1zM20 19h1v1h-1zM1 11h1v1h-1zM54 17h1v1h-1zM39 23h1v1h-1zM45 19h1v1h-1zM43 18h1v1h-1zM58 20h1v1h-1zM5 7h1v1h-1zM44 10h1v1h-1zM24 5h1v1h-1zM10 11h1v1h-1zM21 20h1v1h-1zM57 11h1v1h-1zM34 9h1v1h-1zM36 3h1v1h-1zM45 6h1v1h-1zM43 5h1v1h-1zM9 10h1v1h-1zM44 9h1v1h-1zM15 8h1v1h-1zM15 2h1v1h-1zM17 7h1v1h-1zM13 17h1v1h-1zM52 10h1v1h-1zM16 11h1v1h-1zM57 6h1v1h-1zM37 9h1v1h-1zM37 22h1v1h-1zM14 19h1v1h-1zM40 18h1v1h-1zM19 10h1v1h-1zM55 20h1v1h-1zM7 4h1v1h-1zM53 18h1v1h-1zM54 13h1v1h-1zM48 0h1v1h-1zM49 1h1v1h-1zM12 8h1v1h-1zM35 11h1v1h-1zM6 3h1v1h-1zM41 13h1v1h-1zM4 9h1v1h-1zM14 4h1v1h-1zM42 14h1v1h-1zM51 16h1v1h-1zM36 3h1v1h-1zM2 6h1v1h-1zM36 14h1v1h-1zM12 9h1v1h-1zM24 17h1v1h-1zM40 19h1v1h-1zM47 14h1v1h-1zM22 22h1v1h-1zM42 11h1v1h-1zM51 20h1v1h-1zM51 24h1v1h-1zM27 22h1v1h-1zM61 19h1v1h-1zM8 21h1v1h-1zM50 15h1v1h-1zM19 2h1v1h-1zM4 6h1v1h-1zM11 20h1v1h-1zM30 2h1v1h-1zM54 13h1v1h-1zM53 2h1v1h-1zM38 18h1v1h-1zM13 17h1v1h-1zM21 15h1v1h-1zM17 13h1v1h-1zM26 0h1v1h-1zM2 1h1v1h-1zM38 11h1v1h-1zM0 22h1v1h-1zM5 13h1v1h-1zM32 22h1v1h-1zM12 17h1v1h-1zM7 24h1v1h-1zM16 13h1v1h-1zM53 17h1v1h-1zM21 10h1v1h-1zM43 6h1v1h-1zM59 24h1v1h-1zM11 5h1v1h-1zM54 18h1v1h-1zM55 2h1v1h-1zM4 7h1v1h-1zM20 18h1v1h-1zM23 17h1v1h-1zM48 9h1v1h-1zM17 22h1v1h-1zM53 7h1v1h-1zM54 9h1v1h-1z"/><path fill="#9e5c34" d="M43 24h1v1h-1zM38 17h1v1h-1zM17 16h1v1h-1zM34 10h1v1h-1zM59 0h1v1h-1zM11 17h1v1h-1zM29 6h1v1h-1zM23 14h1v1h-1zM32 18h1v1h-1zM40 16h1v1h-1zM4 9h1v1h-1zM2 6h1v1h-1zM10 13h1v1h-1zM40 24h1v1h-1zM33 18h1v1h-1zM47 24h1v1h-1zM35 12h1v1h-1zM37 1h1v1h-1zM16 13h1v1h-1zM23 23h1v1h-1zM23 23h1v1h-1zM38 24h1v1h-1zM30 15h1v1h-1zM32 16h1v1h-1zM62 4h1v1h-1zM58 13h1v1h-1zM44 20h1v1h-1zM20 17h1v1h-1zM35 23h1v1h-1zM3 17h1v1h-1zM6 13h1v1h-1zM54 14h1v1h-1zM13 24h1v1h-1zM28 16h1v1h-1zM38 14h1v1h-1zM61 16h1v1h-1zM22 11h1v1h-1zM9 14h1v1h-1zM42 22h1v1h-1zM3 14h1v1h-1zM62 8h1v1h-1zM25 22h1v1h-1zM56 5h1v1h-1zM53 8h1v1h-1zM48 18h1v1h-1zM5 6h1v1h-1zM19 22h1v1h-1zM41 17h1v1h-1zM46 22h1v1h-1zM42 18h1v1h-1zM49 24h1v1h-1zM55 1h1v1h-1zM27 3h1v1h-1zM22 20h1v1h-1zM13 12h1v1h-1zM44 6h1v1h-1zM53 7h1v1h-1zM40 0h1v1h-1zM34 23h1v1h-1zM14 16h1v1h-1zM23 23h1v1h-1zM25 17h1v1h-1zM58 12h1v1h-1zM10 3h1v1h-1zM30 13h1v1h-1zM39 12h1v1h-1zM48 0h1v1h-1zM30 20h1v1h-1zM13 9h1v1h-1zM38 2h1v1h-1zM0 14h1v1h-1zM3 11h1v1h-1zM42 18h1v1h-1zM44 19h1v1h-1zM53 16h1v1h-1zM32 16h1v1h-1zM46 6h1v1h-1zM19 23h1v1h-1zM26 20h1v1h-1zM15 23h1v1h-1zM48 15h1v1h-1zM60 2h1v1h-1zM23 7h1v1h-1zM4 23h1v1h-1zM27 13h1v1h-1zM61 5h1v1h-1zM60 8h1v1h-1zM0 16h1v1h-1zM38 5h1v1h-1zM10 6h1v1h-1zM26 22h1v1h-1zM13 16h1v1h-1zM36 6h1v1h-1zM32 24h1v1h-1zM51 0h1v1h-1zM57 21h1v1h-1zM28 20h1v1h-1zM38 15h1v1h-1zM5 20h1v1h-1zM9 2h1v1h-1zM5 23h1v1h-1zM61 3h1v1h-1zM54 7h1v1h-1zM27 15h1v1h-1zM39 4h1v1h-1zM35 22h1v1h-1zM45 10h1v1h-1zM5 13h1v1h-1zM1 23h1v1h-1zM50 24h1v1h-1zM18 13h1v1h-1zM25 18h1v1h-1zM50 5h1v1h-1zM1 23h1v1h-1zM27 7h1v1h-1zM14 11h1v1h-1zM13 22h1v1h-1zM24 14h1v1h-1zM56 8h1v1h-1zM51 9h1v1h-1zM6 9h1v1h-1zM21 17h1v1h-1zM43 9h1v1h-1zM22 12h1v1h-1zM55 6h1v1h-1zM8 21h1v1h-1zM1 15h1v1h-1zM49 22h1v1h-1zM59 9h1v1h-1zM18 0h1v1h-1zM17 17h1v1h-1zM49 10h1v1h-1zM25 13h1v1h-1zM28 10h1v1h-1zM14 3h1v1h-1zM52 24h1v1h-1zM62 22h1v1h-1zM3 6h1v1h-1zM31 2h1v1h-1z"/><path fill="#cf8f62" d="M5 17h1v1h-1zM24 16h1v1h-1zM22 12h1v1h-1zM54 9h1v1h-1zM20 23h1v1h-1zM13 3h1v1h-1zM10 1h1v1h-1zM45 14h1v1h-1zM0 17h1v1h-1zM40 7h1v1h-1zM14 6h1v1h-1zM7 2h1v1h-1zM3 22h1v1h-1zM19 15h1v1h-1zM20 9h1v1h-1zM41 8h1v1h-1zM61 13h1v1h-1zM58 16h1v1h-1zM39 6h1v1h-1zM31 10h1v1h-1zM1 15h1v1h-1zM49 22h1v1h-1zM49 5h1v1h-1zM30 18h1v1h-1zM6 20h1v1h-1zM22 23h1v1h-1zM50 0h1v1h-1zM20 22h1v1h-1zM34 10h1v1h-1zM28 1h1v1h-1zM39 15h1v1h-1zM52 15h1v1h-1zM40 7h1v1h-1zM0 10h1v1h-1zM40 14h1v1h-1zM19 16h1v1h-1zM8 18h1v1h-1zM62 24h1v1h-1zM16 5h1v1h-1zM10 21h1v1h-1zM0 18h1v1h-1zM54 2h1v1h-1zM43 8h1v1h-1zM10 12h1v1h-1zM6 4h1v1h-1zM5 2h1v1h-1zM30 22h1v1h-1zM55 9h1v1h-1zM15 5h1v1h-1zM37 12h1v1h-1zM16 22h1v1h-1zM29 18h1v1h-1zM61 13h1v1h-1zM21 3h1v1h-1zM58 5h1v1h-1zM55 4h1v1h-1zM35 9h1v1h-1zM3 11h1v1h-1zM49 18h1v1h-1zM51 3h1v1h-1zM62 3h1v1h-1zM54 16h1v1h-1zM61 22h1v1h-1zM35 23h1v1h-1zM47 15h1v1h-1zM27 17h1v1h-1zM9 7h1v1h-1zM1 17h1v1h-1zM17 11h1v1h-1zM32 0h1v1h-1zM35 6h1v1h-1zM38 11h1v1h-1zM56 22h1v1h-1zM27 21h1v1h-1zM28 23h1v1h-1zM22 9h1v1h-1zM23 14h1v1h-1zM37 20h1v1h-1zM40 24h1v1h-1zM46 24h1v1h-1zM15 1h1v1h-1zM57 0h1v1h-1zM52 3h1v1h-1zM24 17h1v1h-1zM39 7h1v1h-1zM44 6h1v1h-1zM33 23h1v1h-1zM1 2h1v1h-1zM62 15h1v1h-1zM58 20h1v1h-1zM1 12h1v1h-1zM1 8h1v1h-1zM3 12h1v1h-1zM38 9h1v1h-1zM49 10h1v1h-1zM12 24h1v1h-1zM42 20h1v1h-1zM32 17h1v1h-1zM46 7h1v1h-1zM4 8h1v1h-1zM7 5h1v1h-1zM10 19h1v1h-1zM50 1h1v1h-1zM62 13h1v1h-1zM8 7h1v1h-1zM22 18h1v1h-1zM44 3h1v1h-1zM0 10h1v1h-1zM34 2h1v1h-1zM62 15h1v1h-1zM37 10h1v1h-1zM37 14h1v1h-1zM12 5h1v1h-1zM36 8h1v1h-1zM32 11h1v1h-1zM54 0h1v1h-1zM8 8h1v1h-1zM61 20h1v1h-1zM32 3h1v1h-1zM29 11h1v1h-1zM17 22h1v1h-1zM54 9h1v1h-1zM9 12h1v1h-1zM52 15h1v1h-1zM29 11h1v1h-1zM13 21h1v1h-1zM1 22h1v1h-1zM30 17h1v1h-1zM22 2h1v1h-1zM36 14h1v1h-1zM6 9h1v1h-1zM61 4h1v1h-1zM16 0h1v1h-1zM11 16h1v1h-1zM53 2h1v1h-1zM8 18h1v1h-1z"/><rect x="31" y="13" width="1" height="12" fill="#1a1410"/></svg></div>
  <div class="sw" style="left:283px;top:55px"><svg width="63" height="25" style="display:block"><rect width="63" height="25" fill="#c3c3c3"/><path fill="#6d6d6d" d="M13 0H27V12H13zM40 0H54V12H40zM0 12H13V24H0zM27 12H40V24H27zM54 12H63V24H54zM13 24H27V25H13zM40 24H54V25H40z"/></svg></div>
  <!-- row3 -->
  <div class="sw" style="left:149px;top:85px;width:64px;background:#ebc596"></div>
  <div class="sw" style="left:216px;top:85px;width:64px"><svg width="63" height="25"><rect width="63" height="25" fill="#f6d8ae"/><polyline points="1.0,0 1.0,4 0.8,8 0.6,12 1.0,16 1.2,20 1.0,24" fill="none" stroke="#e3ae78" stroke-width="0.9"/><polyline points="6.2,0 6.6,4 6.1,8 6.4,12 6.7,16 6.6,20 6.4,24" fill="none" stroke="#e3ae78" stroke-width="0.9"/><polyline points="11.3,0 11.6,4 11.1,8 11.5,12 11.7,16 11.5,20 11.4,24" fill="none" stroke="#e3ae78" stroke-width="0.9"/><polyline points="15.4,0 15.2,4 15.6,8 15.1,12 15.5,16 15.3,20 15.3,24" fill="none" stroke="#e3ae78" stroke-width="0.9"/><polyline points="19.5,0 19.5,4 19.2,8 19.5,12 19.4,16 19.5,20 19.3,24" fill="none" stroke="#e3ae78" stroke-width="0.9"/><polyline points="24.3,0 24.4,4 24.5,8 24.7,12 24.8,16 24.6,20 24.8,24" fill="none" stroke="#e3ae78" stroke-width="0.9"/><polyline points="26.5,0 26.0,4 26.4,8 26.5,12 26.3,16 26.1,20 25.8,24" fill="none" stroke="#e3ae78" stroke-width="0.9"/><polyline points="30.1,0 29.7,4 30.1,8 29.8,12 29.7,16 29.3,20 29.4,24" fill="none" stroke="#e3ae78" stroke-width="0.9"/><polyline points="35.7,0 35.6,4 36.1,8 36.3,12 36.4,16 36.5,20 36.0,24" fill="none" stroke="#e3ae78" stroke-width="0.9"/><polyline points="40.2,0 39.8,4 39.6,8 39.4,12 39.4,16 38.9,20 38.6,24" fill="none" stroke="#e3ae78" stroke-width="0.9"/><polyline points="45.8,0 45.9,4 45.7,8 45.4,12 45.6,16 46.0,20 45.5,24" fill="none" stroke="#e3ae78" stroke-width="0.9"/><polyline points="48.5,0 48.3,4 48.0,8 48.3,12 48.2,16 48.0,20 47.9,24" fill="none" stroke="#e3ae78" stroke-width="0.9"/><polyline points="53.7,0 53.4,4 53.1,8 53.2,12 53.5,16 53.7,20 53.6,24" fill="none" stroke="#e3ae78" stroke-width="0.9"/><polyline points="58.3,0 58.5,4 58.8,8 58.4,12 58.0,16 57.9,20 57.5,24" fill="none" stroke="#e3ae78" stroke-width="0.9"/><polyline points="60.9,0 60.7,4 60.2,8 60.3,12 60.2,16 60.3,20 60.1,24" fill="none" stroke="#e3ae78" stroke-width="0.9"/></svg></div>
  <div class="sw" style="left:283px;top:85px"><svg width="63" height="25" style="display:block"><rect width="63" height="25" fill="#c3c3c3"/><path fill="#6d6d6d" d="M13 0H27V6H13zM40 0H54V6H40zM0 6H13V19H0zM27 6H40V19H27zM54 6H63V19H54zM13 19H27V25H13zM40 19H54V25H40z"/></svg></div>
 </div>

 <!-- right buttons -->
 <div class="btn" style="left:478px;top:63px;width:82px;height:22px">Insert Above</div>
 <div class="btn" style="left:478px;top:93px;width:82px;height:22px">Insert Below</div>
 <div class="btn" style="left:478px;top:123px;width:82px;height:22px">Move Up</div>
 <div class="btn dis" style="left:478px;top:153px;width:82px;height:22px">Move Down</div>
 <div class="btn" style="left:478px;top:183px;width:82px;height:22px">Delete</div>
 <div class="a" style="left:477px;top:214px;letter-spacing:-0.12px">Total Thickness:</div>
 <div class="a" style="left:476px;top:238px;width:85px;text-align:right">2 1/8"</div>

 <!-- preview toolbar -->
  <div class="a" style="left:615px;top:40px;width:27px;height:25px;background:#c5dff4;border:1px solid #99cbf2;border-radius:2px 0 0 2px"></div>
 <div class="a" style="left:641px;top:40px;width:13px;height:25px;background:#c5dff4;border:1px solid #99cbf2;border-radius:0 2px 2px 0"></div>
 <svg class="a" style="left:615px;top:40px" width="40" height="25" viewBox="0 0 40 25">
  <path d="M4.4 14 L14 4.6 L14 23.4 L4.4 23.4 Z" fill="#fff"/>
  <path d="M14 4.6 L23.6 14 L14 14 Z" fill="#747474"/>
  <rect x="14" y="14" width="9.6" height="9.4" fill="#fff"/>
  <path d="M4.4 14 L14 4.6 L23.6 14" stroke="#111" stroke-width="1.3" fill="none" stroke-linejoin="round"/>
  <path d="M4.6 23.4 V14.2 H14 M4.4 23.2 H14" stroke="#111" stroke-width="1.3" fill="none"/>
  <path d="M14 23.2 H23.4 V14" stroke="#808080" stroke-width="1.1" fill="none"/>
  <path d="M8.2 23.4 V16.2 H11.6 V23.4 H10.6 V17.2 H9.2 V23.4 Z" fill="#111"/>
  <path d="M15.9 19.3 L18.4 21.6 L21.8 16" stroke="#1d1da8" stroke-width="1.1" fill="none"/>
  <path d="M28.8 11 H35.8 L32.3 14.8 Z" fill="#222"/>
 </svg>
 <svg class="a" style="left:662px;top:42px" width="22" height="22" viewBox="0 0 22 22">
  <rect x="1.6" y="1.6" width="18.8" height="18.8" fill="#fff" stroke="#1a6a93" stroke-width="1.5"/>
  <g stroke="#1a6a93" stroke-width="1.5" fill="none">
   <path d="M5 5 L8.5 8.5"/><path d="M17 5 L13.5 8.5"/><path d="M5 17 L8.5 13.5"/><path d="M17 17 L13.5 13.5"/>
  </g>
  <g fill="#1a6a93">
   <path d="M4 4 H8 L4 8Z"/><path d="M18 4 H14 L18 8Z"/><path d="M4 18 H8 L4 14Z"/><path d="M18 18 H14 L18 14Z"/>
  </g>
 </svg>
 <div class="a" style="left:693px;top:40px;width:27px;height:25px;background:#cce4f7;border:1px solid #99cbf2;border-radius:3px"></div>
 <svg class="a" style="left:693px;top:40px" width="27" height="25" viewBox="0 0 27 25">
  <path d="M4.2 11.6 L10.8 5.2 H13.5 V11.6 Z" fill="#fff" stroke="#1a6a93" stroke-width="1.2"/>
  <rect x="5.6" y="12.2" width="7.6" height="10.4" fill="#fbeab4" stroke="#d08a12" stroke-width="1.1"/>
  <rect x="8.6" y="14.4" width="2.8" height="3" fill="#fff" stroke="#d08a12" stroke-width="1.1"/>
  <path d="M14.6 5.2 H17.2 L23.6 11.4 V12 H14.6Z" fill="#000"/>
  <rect x="14.6" y="12" width="8" height="2.2" fill="#fff"/>
  <rect x="22.2" y="11.5" width="0.8" height="3" fill="#333"/>
  <rect x="14.6" y="14.3" width="9" height="9" fill="#fff" stroke="#7f7f7f" stroke-width="1"/>
  <rect x="13.2" y="4" width="1.5" height="19.6" fill="#7a7a7a"/>
  <path d="M16 19.2 L18.4 21.6 L21.8 16.2" stroke="#1d1da8" stroke-width="1.1" fill="none"/>
 </svg>
 <svg class="a" style="left:726px;top:40px" width="26" height="26" viewBox="0 0 26 26">
  <path d="M3.5 3.5 H7.5 V22.5 H3.5 Z" fill="#fff" stroke="#1a6a93" stroke-width="1.3"/>
  <path d="M7.5 3.5 L17.5 8.5 V22.5 H7.5" fill="#fff" stroke="#1a6a93" stroke-width="1.3"/>
  <path d="M9.5 8 L19.5 13 V22.5 H9.5 Z" fill="#fff" stroke="#d8493a" stroke-width="1.3"/>
  <path d="M12.5 13 L22.5 17.5 V22.5 H12.5 Z" fill="#fff" stroke="#757575" stroke-width="1.3"/>
 </svg>

 <div class="a" style="left:580px;top:72px;width:208px;height:509px;background:#fff;border:1px solid #7f838a"></div>
 <svg class="a" style="left:0px;top:0px" width="798" height="626"><g>
 <path d="M602 326.3 L632 315 L765.5 318.3 L735 331 Z" fill="#040404" stroke="#000" stroke-width="0.8" stroke-linejoin="round"/>
 <path fill="#0e0e0e" d="M687 318h3v1h-3zM698 325h2v1h-2zM734 319h2v1h-2zM627 322h3v1h-3zM628 324h3v1h-3zM662 326h4v1h-4zM639 320h3v1h-3zM641 324h2v1h-2zM751 320h4v1h-4zM651 317h4v1h-4zM653 321h2v1h-2zM621 325h2v1h-2zM657 323h4v1h-4zM741 322h3v1h-3zM724 325h3v1h-3zM697 320h2v1h-2zM651 327h2v1h-2zM625 325h3v1h-3zM739 323h3v1h-3zM719 320h4v1h-4zM736 322h2v1h-2zM692 318h3v1h-3zM685 321h4v1h-4zM694 325h3v1h-3zM628 320h3v1h-3zM684 326h4v1h-4zM719 320h4v1h-4zM723 321h2v1h-2zM678 318h4v1h-4zM668 322h3v1h-3zM647 323h3v1h-3zM745 320h2v1h-2zM715 329h4v1h-4zM676 327h3v1h-3zM696 326h3v1h-3zM664 318h2v1h-2zM650 318h2v1h-2zM729 329h4v1h-4zM651 320h3v1h-3zM712 324h3v1h-3zM686 318h4v1h-4zM736 325h4v1h-4zM618 323h4v1h-4zM748 322h3v1h-3zM707 322h2v1h-2zM728 326h3v1h-3zM633 321h4v1h-4zM643 324h2v1h-2zM698 325h2v1h-2zM658 325h3v1h-3zM643 326h3v1h-3zM693 325h3v1h-3zM729 323h3v1h-3zM728 320h2v1h-2zM641 317h4v1h-4zM692 327h3v1h-3zM727 329h4v1h-4zM646 324h2v1h-2zM657 324h3v1h-3zM740 320h4v1h-4zM671 324h3v1h-3zM647 321h2v1h-2zM741 324h4v1h-4zM689 326h2v1h-2zM707 327h2v1h-2zM656 324h3v1h-3zM696 327h2v1h-2zM676 323h3v1h-3zM654 327h4v1h-4zM693 323h4v1h-4zM694 321h2v1h-2zM661 317h2v1h-2zM725 319h3v1h-3zM657 323h4v1h-4zM693 328h4v1h-4zM704 328h4v1h-4zM656 323h2v1h-2zM716 328h4v1h-4zM706 323h3v1h-3zM645 318h2v1h-2zM724 328h4v1h-4zM642 325h4v1h-4zM726 326h3v1h-3zM644 324h4v1h-4zM631 324h4v1h-4zM640 322h2v1h-2zM669 319h3v1h-3zM733 319h4v1h-4zM688 320h4v1h-4zM712 329h2v1h-2zM722 326h4v1h-4zM737 322h4v1h-4zM638 324h2v1h-2zM739 324h2v1h-2zM717 328h2v1h-2zM643 318h2v1h-2zM726 325h4v1h-4zM635 324h2v1h-2zM688 326h4v1h-4zM740 324h3v1h-3zM668 319h3v1h-3zM630 324h3v1h-3zM621 323h3v1h-3zM656 327h3v1h-3zM720 324h4v1h-4zM727 324h2v1h-2zM705 323h3v1h-3zM623 326h2v1h-2zM659 326h3v1h-3zM698 318h3v1h-3zM640 323h2v1h-2zM629 322h3v1h-3zM646 326h2v1h-2zM715 324h3v1h-3zM691 322h2v1h-2zM696 321h2v1h-2zM691 324h3v1h-3zM717 327h2v1h-2zM703 321h4v1h-4zM680 324h2v1h-2zM631 317h3v1h-3zM651 320h2v1h-2zM713 329h4v1h-4zM671 322h2v1h-2zM736 325h3v1h-3zM651 322h2v1h-2zM671 317h4v1h-4zM661 317h3v1h-3zM636 323h2v1h-2zM691 324h3v1h-3zM673 325h2v1h-2zM616 324h4v1h-4zM666 317h2v1h-2zM651 319h3v1h-3zM683 324h2v1h-2zM679 323h4v1h-4zM650 320h3v1h-3zM734 324h2v1h-2zM736 323h2v1h-2zM715 326h3v1h-3zM705 324h3v1h-3zM660 319h3v1h-3zM640 322h3v1h-3zM623 326h4v1h-4zM670 322h2v1h-2zM734 326h3v1h-3zM645 320h3v1h-3zM698 321h4v1h-4zM687 319h2v1h-2zM684 319h3v1h-3zM690 322h2v1h-2zM726 320h4v1h-4zM656 319h4v1h-4zM627 318h3v1h-3zM681 320h4v1h-4zM664 317h4v1h-4z"/>
 <path d="M602 326.3 L735 331 L735 336.7 L602 335 Z" fill="#050505" stroke="#000" stroke-width="0.8"/>
 <path d="M603 328.4 L735 333.2" stroke="#5e4430" stroke-width="0.7" fill="none"/>
 <path d="M603 330.4 L735 332.5 L735 336 L603 334 Z" fill="#e4bf8b"/>
 <path d="M735 331 L765.5 318.3 L765.5 326.5 L735 336.7 Z" fill="#050505" stroke="#000" stroke-width="0.8" stroke-linejoin="round"/>
 <path d="M736 332.3 L764.5 320.6 L764.5 325.8 L736 335.9 Z" fill="#e4bf8b"/>
</g></svg>
 <!-- splitter -->
 <div class="a" style="left:575px;top:286px;width:1px;height:48px;background:#c8c8c8"></div>
 <svg class="a" style="left:570px;top:305px" width="11" height="11"><path d="M5.5 2.6 L8 5 L5.5 7.4 L3 5 Z" fill="#c8c8c8"/></svg>

 <!-- Structure -->
 <div class="a" style="left:9px;top:277px">Structure</div>
 <div class="grp" style="left:64px;top:281px;width:496px"></div>
 <div class="cb on" style="left:52px;top:300px"><svg width="11" height="11" style="display:block"><path d="M2.6 5.6 L4.6 7.4 L8.4 3.8" stroke="#e6eef8" stroke-width="0.9" fill="none"/></svg></div>
 <div class="a" style="left:70px;top:301px">Purlins</div>

 <div class="a" style="left:88px;top:335px">Construction:</div>
 <div class="inp" style="left:225px;top:330px;width:165px;height:22px;border:1px solid #dadada;border-bottom-color:#c9c9c9;border-radius:3px;padding-left:3px;line-height:22px">General
   <svg style="position:absolute;left:149px;top:8px" width="10" height="7"><path d="M0.8 1 L4.8 5 L8.8 1" stroke="#3a3a3a" stroke-width="1" fill="none"/></svg></div>
 <div class="btn" style="left:396px;top:330px;width:73px;height:22px">Define...</div>

 <div class="a" style="left:88px;top:364px">Width:</div>
 <div class="inp" style="left:225px;top:359px;width:100px;height:22px">3 1/2"</div>
 <div class="a" style="left:88px;top:392px">Spacing:</div>
 <div class="inp" style="left:225px;top:387px;width:100px;height:22px">24"</div>
 <div class="a" style="left:331px;top:392px">On Center</div>

 <div class="cb" style="left:88px;top:419px"></div>
 <div class="a" style="left:106px;top:420px">Max Length:</div>
 <div class="inp dis" style="left:225px;top:415px;width:100px;height:21px">144"</div>
 <div class="a" style="left:88px;top:448px">Bottom Run Offset:</div>
 <div class="inp" style="left:225px;top:443px;width:100px;height:22px">0"</div>
 <div class="a" style="left:88px;top:476px">Top Run Offset:</div>
 <div class="inp" style="left:225px;top:471px;width:100px;height:22px">0"</div>

 <div class="cb" style="left:88px;top:502px"></div>
 <div class="a" style="left:106px;top:503px;letter-spacing:-0.35px">Use Equal Spacing</div>
 <div class="cb" style="left:52px;top:528px"></div>
 <div class="a" style="left:70px;top:529px">Auto Detail as Insulation</div>
 <div class="cb" style="left:52px;top:554px"></div>
 <div class="a" style="left:70px;top:555px">Air Gap</div>

 <!-- bottom buttons -->
 <div class="btn" style="left:13px;top:591px;width:87px;height:22px;letter-spacing:-0.12px">Number Style...</div>
 <div class="btn" style="left:550px;top:591px;width:73px;height:22px;border:1px solid #0067c0;border-radius:4px">OK</div>
 <div class="btn" style="left:631px;top:591px;width:73px;height:22px">Cancel</div>
 <div class="btn" style="left:712px;top:591px;width:73px;height:22px">Help</div>
 <!-- grip -->
 <svg class="a" style="left:784px;top:613px" width="11" height="11">
  <g fill="#b5b5b5"><rect x="8" y="2" width="2" height="2"/><rect x="5" y="5" width="2" height="2"/><rect x="8" y="5" width="2" height="2"/><rect x="2" y="8" width="2" height="2"/><rect x="5" y="8" width="2" height="2"/><rect x="8" y="8" width="2" height="2"/></g>
 </svg>
</div>
<div class="frame"></div>
</body></html>
